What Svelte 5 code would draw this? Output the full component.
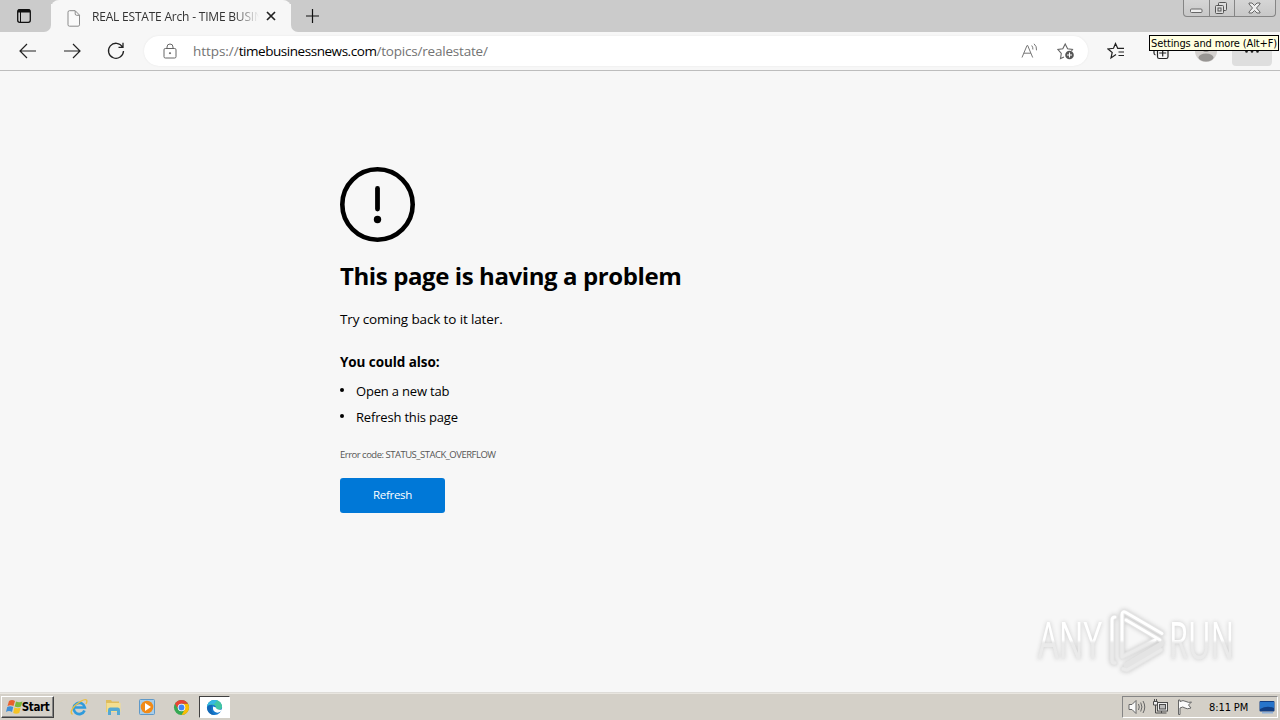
<script>
	const tabTitle = 'REAL ESTATE Arch - TIME BUSIN';
	const url = { scheme: 'https://', host: 'timebusinessnews.com', path: '/topics/realestate/' };
	const suggestions = ['Open a new tab', 'Refresh this page'];
	const errorCode = 'STATUS_STACK_OVERFLOW';
	const clock = '8:11 PM';
</script>

<div class="desktop">
	<header class="tabstrip">
		<button class="tab-actions" aria-label="Tab actions menu">
			<svg width="16" height="16" viewBox="0 0 16 16" fill="none" stroke="#111">
				<rect x="1.7" y="1.7" width="12.6" height="12.6" rx="2" stroke-width="1.3" />
				<path d="M2 3.5h12M2 2.5h12" stroke-width="2" />
				<path d="M4.5 4v10" stroke-width="1" />
			</svg>
		</button>
		<div class="tab">
			<svg class="page-icon" width="14" height="17" viewBox="0 0 14 17" fill="#fafafa" stroke="#8b8b8b">
				<path d="M2.5.7h5.7l4.3 4.4v9.7q0 1.4-1.4 1.4H2.5Q1 16.2 1 14.8V2.2Q1 .7 2.5.7zM8.2.9v3q0 1.4 1.4 1.4h2.7" />
			</svg>
			<span class="tab-title">{tabTitle}</span>
			<svg class="tab-close" width="10" height="10" viewBox="0 0 10 10" stroke="#222" stroke-width="1.7">
				<path d="M1 1l8 8M9 1L1 9" />
			</svg>
		</div>
		<button class="new-tab" aria-label="New tab">
			<svg width="14" height="14" viewBox="0 0 14 14" stroke="#111" stroke-width="1.2">
				<path d="M6.5 0v14M0 7h13" />
			</svg>
		</button>
		<div class="window-controls">
			<span class="control min">
				<svg width="13" height="6" viewBox="0 0 13 6" fill="#eee" stroke="#666"><rect x=".5" y="1" width="11.5" height="3.5" rx="1" /></svg>
			</span>
			<span class="control max">
				<svg width="14" height="14" viewBox="0 0 14 14" fill="#ddd" stroke="#555">
					<rect x="4.5" y="1.5" width="8" height="8" rx="1" />
					<rect x="1.5" y="4.5" width="8" height="8" rx="1" />
					<rect x="4" y="7" width="3" height="3" />
				</svg>
			</span>
			<span class="control close">
				<svg width="13" height="12" viewBox="0 0 13 12" fill="#eee" stroke="#666">
					<path d="M1 1h3l2.5 2.5L9 1h3v1L8.5 6 12 10v1H9L6.5 8.5 4 11H1v-1l3.5-4L1 2z" />
				</svg>
			</span>
		</div>
	</header>

	<nav class="toolbar">
		<button class="tool" aria-label="Back">
			<svg width="18" height="16" viewBox="0 0 18 16" fill="none" stroke="#222" stroke-width="1.2"><path d="M8 1L1 8l7 7M1 8h16" /></svg>
		</button>
		<button class="tool" aria-label="Forward">
			<svg width="18" height="16" viewBox="0 0 18 16" fill="none" stroke="#222" stroke-width="1.2"><path d="M10 1l7 7-7 7M17 8H1" /></svg>
		</button>
		<button class="tool" aria-label="Refresh">
			<svg width="18" height="18" viewBox="0 0 18 18" fill="none" stroke="#222" stroke-width="1.3"><path d="M15.5 5A7.5 7.5 0 1 0 16.5 9M16 .8v4.5h-4.5" /></svg>
		</button>
		<div class="address">
			<svg class="lock" width="14" height="16" viewBox="0 0 14 16" fill="none" stroke="#666">
				<rect x="1" y="5.5" width="12" height="9.5" rx="1.3" />
				<path d="M4 5.5V4a3 3 0 0 1 6 0v1.5" />
				<circle cx="7" cy="10.2" r=".6" fill="#555" />
			</svg>
			<span class="url">{url.scheme}<b>{url.host}</b><span class="path">{url.path}</span></span>
			<svg class="read-aloud" width="18" height="16" viewBox="0 0 18 16" fill="none" stroke="#777">
				<path d="M1 14.5L6 2.5h.7l5 12M2.8 10.2h7.1M10.7 2.5q1.3 1.5 1.2 4M13 .8q3 2.5 2.5 6.5" />
			</svg>
			<svg class="add-favorite" width="18" height="18" viewBox="0 0 18 18" fill="none" stroke="#666" stroke-width="1.1">
				<path d="M7 15l-3.5 1.5.8-5L1 7.5l4.8-.7L8.2 2l2.4 4.8 4.9.7-1 1.5" />
				<circle cx="12.5" cy="13" r="4.3" fill="#555" stroke="none" />
				<path d="M12.5 10.5v5M10 13h5" stroke="#fff" />
			</svg>
		</div>
		<div class="actions">
			<button class="tool" aria-label="Favorites">
				<svg width="18" height="18" viewBox="0 0 18 18" fill="none" stroke="#222" stroke-width="1.2">
					<path d="M9 12.5L4 16l1.2-5.5L1 7l5.5-.7L8.5 1.500l2.200 4.800H17M11.500 10H17M11.500 13.500H17" />
				</svg>
			</button>
			<button class="tool" aria-label="Collections">
				<svg width="18" height="18" viewBox="0 0 18 18" fill="none" stroke="#222" stroke-width="1.2">
					<path d="M3.5 13Q2 12.5 2 11V4q0-2 2-2h7q1.5 0 2 1.5" />
					<rect x="5.5" y="5.5" width="10.5" height="11" rx="1.8" />
					<path d="M10.7 7.5v7M7.2 11h7" />
				</svg>
			</button>
			<button class="tool" aria-label="Profile">
				<svg width="22" height="22" viewBox="0 0 22 22">
					<circle cx="11" cy="11" r="11" fill="#d4d1cf" />
					<circle cx="11" cy="8" r="4" fill="#979593" />
					<ellipse cx="11" cy="17.5" rx="7.5" ry="4" fill="#979593" />
				</svg>
			</button>
			<button class="tool more" aria-label="Settings and more">
				<svg width="14" height="3" viewBox="0 0 14 3" fill="#222"><circle cx="1.5" cy="1.5" r="1.3" /><circle cx="7" cy="1.5" r="1.3" /><circle cx="12.5" cy="1.5" r="1.3" /></svg>
			</button>
		</div>
		<div class="tooltip" role="tooltip">Settings and more (Alt+F)</div>
	</nav>

	<main>
		<section class="problem">
			<svg class="alert" width="75" height="75" viewBox="0 0 75 75">
				<circle cx="37.5" cy="37.5" r="35.2" fill="none" stroke="#000" stroke-width="4.6" />
				<path d="M37.5 21.5v20.5" stroke="#000" stroke-width="4.8" stroke-linecap="round" />
				<circle cx="37.5" cy="52.5" r="3.7" />
			</svg>
			<h1>This page is having a problem</h1>
			<p class="hint">Try coming back to it later.</p>
			<h2>You could also:</h2>
			<ul>
				{#each suggestions as suggestion}
					<li><span>{suggestion}</span></li>
				{/each}
			</ul>
			<p class="code">Error code: {errorCode}</p>
			<button class="refresh"><span>Refresh</span></button>
		</section>
		<svg class="watermark" width="210" height="72" viewBox="0 0 210 72">
			<defs>
				<linearGradient id="fade" x1="0" y1="0" x2="0" y2="72" gradientUnits="userSpaceOnUse">
					<stop offset=".5" stop-color="#fff" />
					<stop offset=".54" stop-color="#eaeaea" />
				</linearGradient>
			</defs>
			<g fill="url(#fade)">
				<text x="7" y="55" textLength="64" lengthAdjust="spacingAndGlyphs">ANY</text>
				<text x="138" y="55" textLength="65" lengthAdjust="spacingAndGlyphs">RUN</text>
			</g>
			<g fill="none" stroke-linecap="round" stroke-linejoin="round">
				<path d="M84 13q-3 0-3 3v40q0 3 3 3M91 53V10.5q0-4 4-2l36 21M95 16l34 20q4 3 0 5l-34 20M91 53l33-17M92 65l4 1 34-20" stroke="#e4e4e4" stroke-width="5" />
				<path d="M84 13q-3 0-3 3v40q0 3 3 3M91 53V10.5q0-4 4-2l36 21M95 16l34 20M91 53l33-17M92 65l4 1 34-20" stroke="url(#fade)" stroke-width="3" />
			</g>
		</svg>
	</main>

	<footer class="taskbar">
		<button class="start">
			<svg width="17" height="16" viewBox="0 0 17 16">
				<path d="M3 2q3-2 6 0L7.5 7q-3-1.5-6 0z" fill="#e8602c" />
				<path d="M10 2.5q3 1.5 6.5 0L15 7.5q-3 1.5-6.3 0z" fill="#79b83b" />
				<path d="M1.2 8q3-1.5 6 0L6 13q-3-2-6 0z" fill="#3f8ed6" />
				<path d="M8.4 8.6q3 1.5 6.3 0L13.2 14q-3 1.5-6 0z" fill="#f5c324" />
			</svg>
			<span>Start</span>
		</button>
		<div class="launchers">
			<span class="launcher">
				<svg width="18" height="18" viewBox="0 0 18 18" fill="none">
					<path d="M14.5 12.5A5.6 5.6 0 1 1 14.8 9.5H5" stroke="#2f9bdc" stroke-width="2.7" />
					<path d="M2.5 16.5Q-1 14 5 7.5 14 0 16.5 2q1 1-.5 4" stroke="#e9bf43" stroke-width="1.4" />
				</svg>
			</span>
			<span class="launcher">
				<svg width="18" height="18" viewBox="0 0 18 18">
					<path d="M2 2h5l1 1.5h7V14H2z" fill="#dfbd5d" />
					<path d="M2.5 5h14v9h-14z" fill="#f3de91" />
					<path d="M4 17v-5q0-2.5 2-2.5h8q2 0 2 2.5v5h-3v-4H7v4z" fill="#55a9d3" />
				</svg>
			</span>
			<span class="launcher">
				<svg width="18" height="18" viewBox="0 0 18 18">
					<rect x="1.5" y="1.5" width="15" height="15" rx="1" fill="#a7cdea" stroke="#5f99c8" />
					<circle cx="9" cy="9" r="6.3" fill="#f18a17" />
					<path d="M7 5l6 4-6 4z" fill="#fff" />
				</svg>
			</span>
			<span class="launcher">
				<svg width="17" height="17" viewBox="0 0 18 18">
					<circle cx="9" cy="9" r="8" fill="#35a853" />
					<path d="M9 9V5h6.9A8 8 0 0 1 9 17l3.5-6z" fill="#fbbc04" />
					<path d="M2.1 5A8 8 0 0 1 15.9 5H9a4 4 0 0 0-3.5 6z" fill="#e94335" />
					<circle cx="9" cy="9" r="4" fill="#fff" />
					<circle cx="9" cy="9" r="3.1" fill="#4285f4" />
				</svg>
			</span>
			<span class="launcher active">
				<svg width="17" height="17" viewBox="0 0 18 18">
					<circle cx="9" cy="9" r="8" fill="#1479ce" />
					<path d="M1.2 7.5Q3 1 9.5 1q7 .5 7.5 7 0 3.5-4 3.5-3.5 0-2.5-2 .5-2.5-3-3.500-4-.8-6.300 1.500z" fill="#42c6a2" />
					<path d="M1.5 6Q4 1 9 1l3 .5-3.5 4Q3 5 1.2 8z" fill="#35b8e4" />
					<path d="M7.5 8q-1 6 4.500 6.500 2 0 4.500-1.900l.5-1.600q-6 1-6.500-2z" fill="#fff" />
					<path d="M1.1 10Q2 6 6.500 6.500 3.800 12 9 17q-7-.3-7.900-7z" fill="#1368b5" />
				</svg>
			</span>
		</div>
		<div class="tray">
			<svg class="volume" width="18" height="16" viewBox="0 0 18 16" fill="#fafafa" stroke="#666">
				<path d="M1 5.500h3L8 1.500v13L4 10.500H1z" />
				<path d="M10.5 5q1.5 3 0 6M12.7 3.5q2.5 4.5 0 9M15 2q3.5 6 0 12" fill="none" />
			</svg>
			<svg class="network" width="17" height="16" viewBox="0 0 17 16" fill="#eee" stroke="#4b4b4b">
				<rect x="5.5" y="3.5" width="10" height="8.5" />
				<rect x="7.5" y="5.5" width="6" height="4.5" fill="#bbb" />
				<path d="M3.5 6v8h11M9.5 12v2" fill="none" />
				<path d="M1.5 2.5h4V6h-4zM2.5 0v2.5M4.5 0v2.5" />
			</svg>
			<svg class="flag" width="16" height="16" viewBox="0 0 16 16" fill="#fafafa" stroke="#666">
				<path d="M1.5 1v14.5h1.5V9q3-2 5 0 2 1.5 6 0L11.5 6 14.5 3q-3 1-5.5-.5Q6 .7 3 2.5V1z" />
			</svg>
			<span class="clock">{clock}</span>
			<svg class="desktop-icon" width="16" height="14" viewBox="0 0 16 14">
				<rect x=".5" y="1" width="15" height="10.5" rx="1" fill="#123e83" />
				<path d="M1 2h14v6Q8 5 1 9z" fill="#2774ca" />
				<path d="M3 12h11v1.5H3z" fill="#8fb0d8" />
			</svg>
		</div>
	</footer>
</div>

<style>
	:global(body) {
		margin: 0;
		overflow: hidden;
	}

	.desktop {
		display: flex;
		flex-direction: column;
		width: 1280px;
		height: 720px;
		overflow: hidden;
		background: #f7f7f7;
		color: #000;
		font-family: 'Open Sans', 'Noto Sans', sans-serif;
	}

	.desktop * {
		box-sizing: border-box;
	}

	button {
		display: flex;
		align-items: center;
		justify-content: center;
		padding: 0;
		border: 0;
		background: none;
		color: inherit;
		font-family: inherit;
	}

	svg {
		display: block;
		flex: none;
	}

	.tabstrip {
		display: flex;
		flex: none;
		align-items: flex-start;
		height: 32px;
		background: #cbcbcb;
	}

	.tab-actions {
		width: 51px;
		height: 32px;
		padding-right: 3px;
		border-bottom-right-radius: 7px;
		background: #cbcbcb;
		box-shadow: 4px 4px 0 #f7f7f7;
	}

	.tab {
		display: flex;
		align-items: center;
		width: 240px;
		height: 32px;
		padding: 0 14px 0 16px;
		border-radius: 8px 8px 0 0;
		background: #f7f7f7;
	}

	.page-icon {
		margin-top: 4px;
	}

	.tab-title {
		width: 167px;
		margin-left: 11px;
		overflow: hidden;
		white-space: nowrap;
		color: #333;
		font-size: 12px;
		letter-spacing: -0.2px;
		mask-image: linear-gradient(90deg, #000 142px, transparent 167px);
	}

	.tab-close {
		margin-left: 7px;
	}

	.new-tab {
		width: 43px;
		height: 32px;
		border-bottom-left-radius: 7px;
		background: #cbcbcb;
		box-shadow: -4px 4px 0 #f7f7f7;
	}

	.window-controls {
		display: flex;
		width: 93px;
		height: 17px;
		margin-left: auto;
		margin-right: 4px;
		border: 1px solid #858585;
		border-top: 0;
		border-radius: 0 0 4px 4px;
		background: linear-gradient(#d5d5d5, #c8c8c8);
	}

	.control {
		display: flex;
		align-items: center;
		justify-content: center;
		width: 25px;
	}

	.control + .control {
		border-left: 1px solid #858585;
	}

	.min {
		padding-top: 5px;
	}

	.control.max {
		padding-right: 3px;
	}

	.control.close {
		flex: 1;
		padding-right: 2px;
	}

	.toolbar {
		position: relative;
		display: flex;
		flex: none;
		align-items: center;
		gap: 4px;
		height: 39px;
		padding: 0 8px;
		border-bottom: 1px solid #bdbdbd;
		background: #f7f7f7;
	}

	.tool {
		width: 40px;
		height: 30px;
		border-radius: 4px;
	}

	.address {
		display: flex;
		align-items: center;
		width: 944px;
		height: 30px;
		margin-left: 4px;
		padding: 0 13px 0 19px;
		border-radius: 15px;
		background: #fff;
		box-shadow: 0 0 2px #e4e4e4;
	}

	.url {
		margin-left: 16px;
		color: #737373;
		font-size: 13.5px;
		letter-spacing: -0.05px;
	}

	.url b {
		color: #000;
		font-weight: 400;
		letter-spacing: -0.45px;
	}

	.path {
		letter-spacing: -0.2px;
	}

	.read-aloud {
		margin-left: auto;
	}

	.add-favorite {
		margin-left: 18px;
	}

	.actions {
		display: flex;
		gap: 5px;
		margin-left: 4px;
	}

	.more {
		margin-left: 1px;
		background: #dedede;
	}

	.tooltip {
		position: absolute;
		top: 3px;
		right: 1px;
		width: 130px;
		height: 16px;
		border: 1px solid #000;
		background: #ffffe1;
		font: 11px/15px 'DejaVu Sans Condensed', 'DejaVu Sans', sans-serif;
		letter-spacing: -0.14px;
		text-align: center;
		white-space: nowrap;
	}

	main {
		position: relative;
		flex: 1;
		border-bottom: 1px solid #dedcd8;
		background: #f7f7f7;
	}

	.problem {
		width: 600px;
		padding: 96px 0 0 340px;
		box-sizing: content-box;
	}

	h1 {
		margin: 18px 0 0;
		font-size: 24px;
		font-weight: 700;
		line-height: 32px;
		letter-spacing: -0.4px;
	}

	.hint {
		margin: 17px 0 0;
		font-size: 13.5px;
		line-height: 20px;
		letter-spacing: -0.13px;
	}

	h2 {
		margin: 23px 0 0;
		font-size: 13.5px;
		font-weight: 700;
		line-height: 20px;
		letter-spacing: -0.08px;
	}

	ul {
		margin: 6px 0 0;
		padding: 0;
		list-style: none;
	}

	li {
		display: flex;
		align-items: center;
		height: 26px;
		font-size: 13px;
		letter-spacing: -0.18px;
	}

	li::before {
		content: '';
		width: 4px;
		height: 4px;
		margin: 0 12px 3px 0;
		border-radius: 50%;
		background: #000;
	}

	.code {
		margin: 18px 0 0;
		color: #555;
		font-size: 9.5px;
		line-height: 14px;
		letter-spacing: -0.5px;
	}

	.refresh {
		width: 105px;
		height: 35px;
		margin-top: 16px;
		padding-bottom: 2px;
		border-radius: 3px;
		background: #0078d7;
		color: #fff;
		font-size: 11.5px;
		letter-spacing: -0.3px;
	}

	.watermark {
		position: absolute;
		right: 39px;
		bottom: 16px;
		overflow: visible;
		filter: drop-shadow(0 0 2px #c8c8c8);
	}

	.watermark text {
		font-family: 'Open Sans', sans-serif;
		font-size: 51px;
		font-weight: 400;
	}

	.taskbar {
		display: flex;
		flex: none;
		align-items: center;
		height: 27px;
		padding: 1px 2px 1px 1px;
		border-top: 1px solid #e9e6e0;
		background: #d4d0c8;
	}

	.start {
		width: 53px;
		height: 22px;
		border: 1px solid;
		border-color: #fff #404040 #404040 #fff;
		box-shadow: inset -1px -1px #858585;
		font: 700 11.5px 'DejaVu Sans Condensed', 'DejaVu Sans', sans-serif;
		letter-spacing: -0.4px;
	}

	.start span {
		margin-left: -1px;
	}

	.launchers {
		display: flex;
		gap: 2px;
		margin-left: 9px;
	}

	.launcher {
		display: flex;
		align-items: center;
		justify-content: center;
		width: 32px;
		height: 22px;
	}

	.launcher.active {
		width: 31px;
		border: 1px solid;
		border-color: #404040 #fff #fff #404040;
		background: #fff;
	}

	.tray {
		display: flex;
		align-items: center;
		width: 156px;
		height: 22px;
		margin-left: auto;
		padding: 0 2px 0 5px;
		border: 1px solid;
		border-color: #858585 #fff #fff #858585;
	}

	.network {
		margin-left: 6px;
	}

	.flag {
		margin-left: 8px;
	}

	.clock {
		width: 41px;
		margin-left: 16px;
		font: 11px 'DejaVu Sans Condensed', 'DejaVu Sans', sans-serif;
		letter-spacing: -0.1px;
		white-space: nowrap;
	}

	.desktop-icon {
		margin-left: auto;
	}
</style>
